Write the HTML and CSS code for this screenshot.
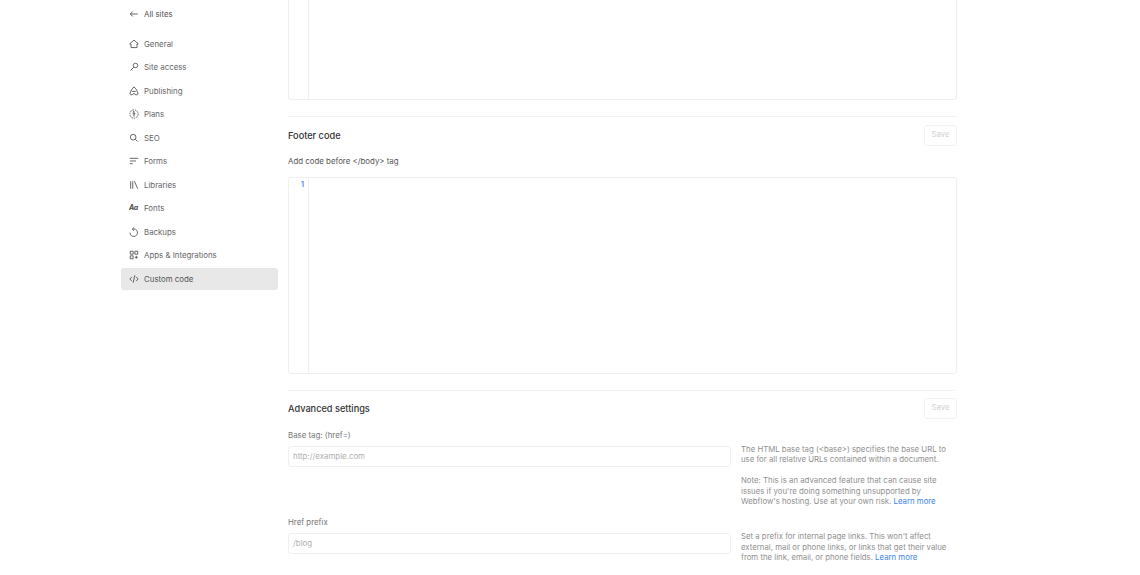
FILE: index.html
```html
<!DOCTYPE html>
<html lang="en">
<head>
<meta charset="utf-8">
<title>Custom code</title>
<link rel="stylesheet" href="styles.css">
</head>
<body>
<div class="page">
  <nav class="sidebar">
    <a class="back"><svg class="icon" viewBox="0 0 12 12"><path d="M10.500 6H1.500M4.500 3 1.500 6l3 3"/></svg>All sites</a>
    <ul class="menu">
      <li class="item"><svg class="icon" viewBox="0 0 12 12"><path d="M1 5.800 6 1.300l5 4.500v.3H9.600v4.200H2.400V6.100H1z"/></svg>General</li>
      <li class="item"><svg class="icon" viewBox="0 0 12 12"><circle cx="7.800" cy="4.200" r="2.700"/><path d="M5.800 6.200 1.800 10.200M3 9l1 1"/></svg>Site access</li>
      <li class="item"><svg class="icon" viewBox="0 0 12 12"><path d="M6 1 9 4.500l2 5-2.500 1.300L6 8.800l-2.500 2L1 9.500l2-5z"/><path d="M3.800 6.500h4.400"/></svg>Publishing</li>
      <li class="item"><svg class="icon" viewBox="0 0 12 12"><circle class="dash" cx="6" cy="6" r="5"/><path d="M4.500 4 6 2.800v6.400M4.300 5.800h3.400"/></svg>Plans</li>
      <li class="item"><svg class="icon" viewBox="0 0 12 12"><circle cx="5" cy="5" r="3.400"/><path d="m7.500 7.500 2.500 2.500"/></svg>SEO</li>
      <li class="item"><svg class="icon" viewBox="0 0 12 12"><path d="M1 2.800h10M1 6h7.500M1 9.200h3.500"/></svg>Forms</li>
      <li class="item"><svg class="icon" viewBox="0 0 12 12"><path d="M2 1.500v9M4.500 1.500v9M6.500 1.500l4 9"/></svg>Libraries</li>
      <li class="item"><span class="aa">Aa</span>Fonts</li>
      <li class="item"><svg class="icon" viewBox="0 0 12 12"><path d="M4.200 2.600a4.500 4.500 0 1 1-3 4.200M6.200.5 4 2.600l2.200 2"/></svg>Backups</li>
      <li class="item"><svg class="icon" viewBox="0 0 12 12"><path d="M1.500 1.500h3.500v3.500H1.500zM7 1.500h3.500v3.500H7zM1.500 7H5v3.500H1.500zM8.750 7v3.500M7 8.750h3.500"/></svg>Apps &amp; Integrations</li>
      <li class="item active"><svg class="icon" viewBox="0 0 12 12"><path d="M3.500 3.500 1 6l2.500 2.500M8.500 3.500 11 6 8.500 8.500M7 1.500l-2 9"/></svg>Custom code</li>
    </ul>
  </nav>
  <main class="content">
    <div class="editor editor-top"><div class="gutter"></div></div>
    <section class="section">
      <header class="head"><h2>Footer code</h2><button class="save">Save</button></header>
      <p class="label">Add code before &lt;/body&gt; tag</p>
      <div class="editor editor-main"><div class="gutter"><span class="line-no">1</span></div></div>
    </section>
    <section class="section">
      <header class="head"><h2>Advanced settings</h2><button class="save">Save</button></header>
      <div class="field">
        <div class="field-main">
          <p class="label muted">Base tag: (href=)</p>
          <div class="input">http://example.com</div>
        </div>
        <div class="help">
          <p>The HTML base tag (&lt;base&gt;) specifies the base URL to use for all relative URLs contained within a document.</p>
          <p>Note: This is an advanced feature that can cause site issues if you're doing something unsupported by Webflow's hosting. Use at your own risk. <a>Learn more</a></p>
        </div>
      </div>
      <div class="field">
        <div class="field-main">
          <p class="label muted">Href prefix</p>
          <div class="input">/blog</div>
        </div>
        <div class="help">
          <p>Set a prefix for internal page links. This won't affect external, mail or phone links, or links that get their value from the link, email, or phone fields. <a>Learn more</a></p>
        </div>
      </div>
    </section>
  </main>
</div>
</body>
</html>
```
FILE: styles.css
```css
* { box-sizing: border-box; }
html, body { margin: 0; height: 100%; overflow: hidden; background: #fff; }
body { font-family: Inter, "Liberation Sans", sans-serif; font-size: 7.875px; line-height: 10.500px; color: #666; }
p, h2, ul { margin: 0; padding: 0; }
.page { display: flex; height: 575px; padding-left: 121px; gap: 10px; overflow: hidden; }
.sidebar { width: 157px; flex: none; padding-top: 3.500px; }
.back, .item { display: flex; align-items: center; gap: 5px; height: 21.500px; padding-left: 8px; border-radius: 3px; }
.menu { list-style: none; display: flex; flex-direction: column; gap: 2px; margin-top: 8px; }
.back { color: #555; }
.active { background: #e8e8e8; color: #555; }
.icon { width: 10px; height: 10px; flex: none; fill: none; stroke: #4a4a4a; stroke-width: 1; }
.dash { stroke-dasharray: 2 1; }
.aa { width: 10px; flex: none; font-size: 7px; font-weight: 700; font-style: italic; color: #4a4a4a; letter-spacing: -.2px; }
.content { width: 669px; flex: none; }
.editor { display: flex; border: 1px solid #efefef; border-radius: 3px; }
.editor-top { height: 100px; border-top: 0; border-radius: 0 0 3px 3px; }
.editor-main { height: 197px; }
.gutter { width: 20px; flex: none; border-right: 1px solid #efefef; text-align: right; padding: 1.500px 4px 0 0; }
.line-no { font-size: 7px; font-weight: 600; color: #3b82f0; display: inline-block; }
.section { margin-top: 16px; border-top: 1px solid #f3f3f3; padding-top: 7.500px; }
.head { display: flex; justify-content: space-between; align-items: center; height: 21px; }
.head h2 { font-size: 9.200px; font-weight: 500; color: #333; padding-top: 1.500px; }
.save { width: 33px; height: 21px; padding: 0; background: #fff; border: 1px solid #f3f3f3; border-radius: 3px; font: inherit; font-size: 7.700px; color: #d0d0d0; }
.label { color: #555; margin-top: 10.500px; margin-bottom: 10px; }
.muted { color: #777; margin-bottom: 5.500px; }
.field { display: flex; gap: 10px; }
.field-main { width: 443px; flex: none; }
.input { height: 21.500px; border: 1px solid #efefef; border-radius: 3px; padding: 0 4px; display: flex; align-items: center; color: #b0b0b0; }
.help { padding-top: 25px; width: 216px; color: #909090; font-size: 7.800px; line-height: 10.400px; }
.help p + p { margin-top: 10.400px; }
.help a { color: #3b82f0; }
```
